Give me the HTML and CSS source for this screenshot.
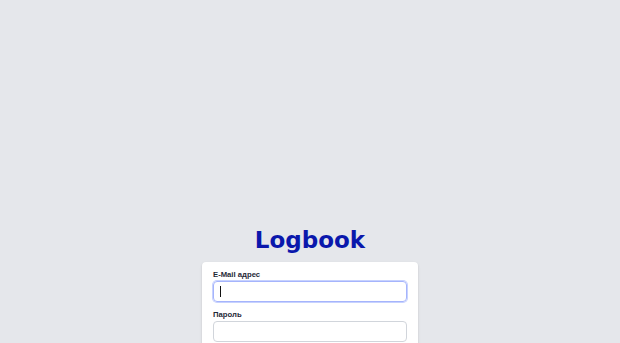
FILE: index.html
```html
<!DOCTYPE html>
<html lang="ru">
<head>
<meta charset="utf-8">
<title>Logbook</title>
<link rel="stylesheet" href="styles.css">
</head>
<body>
<main class="page">
  <h1 class="brand">Logbook</h1>
  <form class="card">
    <label class="label" for="email">E-Mail адрес</label>
    <div class="input focused"><span class="caret"></span></div>
    <label class="label" for="pw">Пароль</label>
    <div class="input"></div>
  </form>
</main>
</body>
</html>
```
FILE: styles.css
```css
html, body {
  margin: 0;
  padding: 0;
  background: #e5e7eb;
  font-family: "DejaVu Sans", Verdana, sans-serif;
  height: 343px;
  overflow: hidden;
}
.page {
  display: flex;
  flex-direction: column;
  align-items: center;
  padding-top: 226px;
}
.brand {
  margin: 0;
  font-size: 23px;
  line-height: 29px;
  font-weight: bold;
  color: #0a18ac;
}
.card {
  margin-top: 7px;
  width: 194px;
  padding: 8px 11px 20px;
  background: #fff;
  border-radius: 4px;
  box-shadow: 0 1px 3px rgba(0,0,0,0.1), 0 1px 2px rgba(0,0,0,0.06);
  display: flex;
  flex-direction: column;
}
.label {
  font-family: "Liberation Sans", Arial, sans-serif;
  font-size: 7.7px;
  line-height: 9px;
  font-weight: bold;
  color: #1f2937;
  margin-bottom: 2px;
}
.input {
  height: 19px;
  border: 1px solid #d1d5db;
  border-radius: 4px;
  margin-bottom: 8px;
  display: flex;
  align-items: center;
  padding-left: 6px;
}
.input.focused {
  border-color: #a5b4fc;
  box-shadow: 0 0 0 1px #c7d2fe;
}
.caret {
  width: 1px;
  height: 11px;
  background: #111;
}
```
